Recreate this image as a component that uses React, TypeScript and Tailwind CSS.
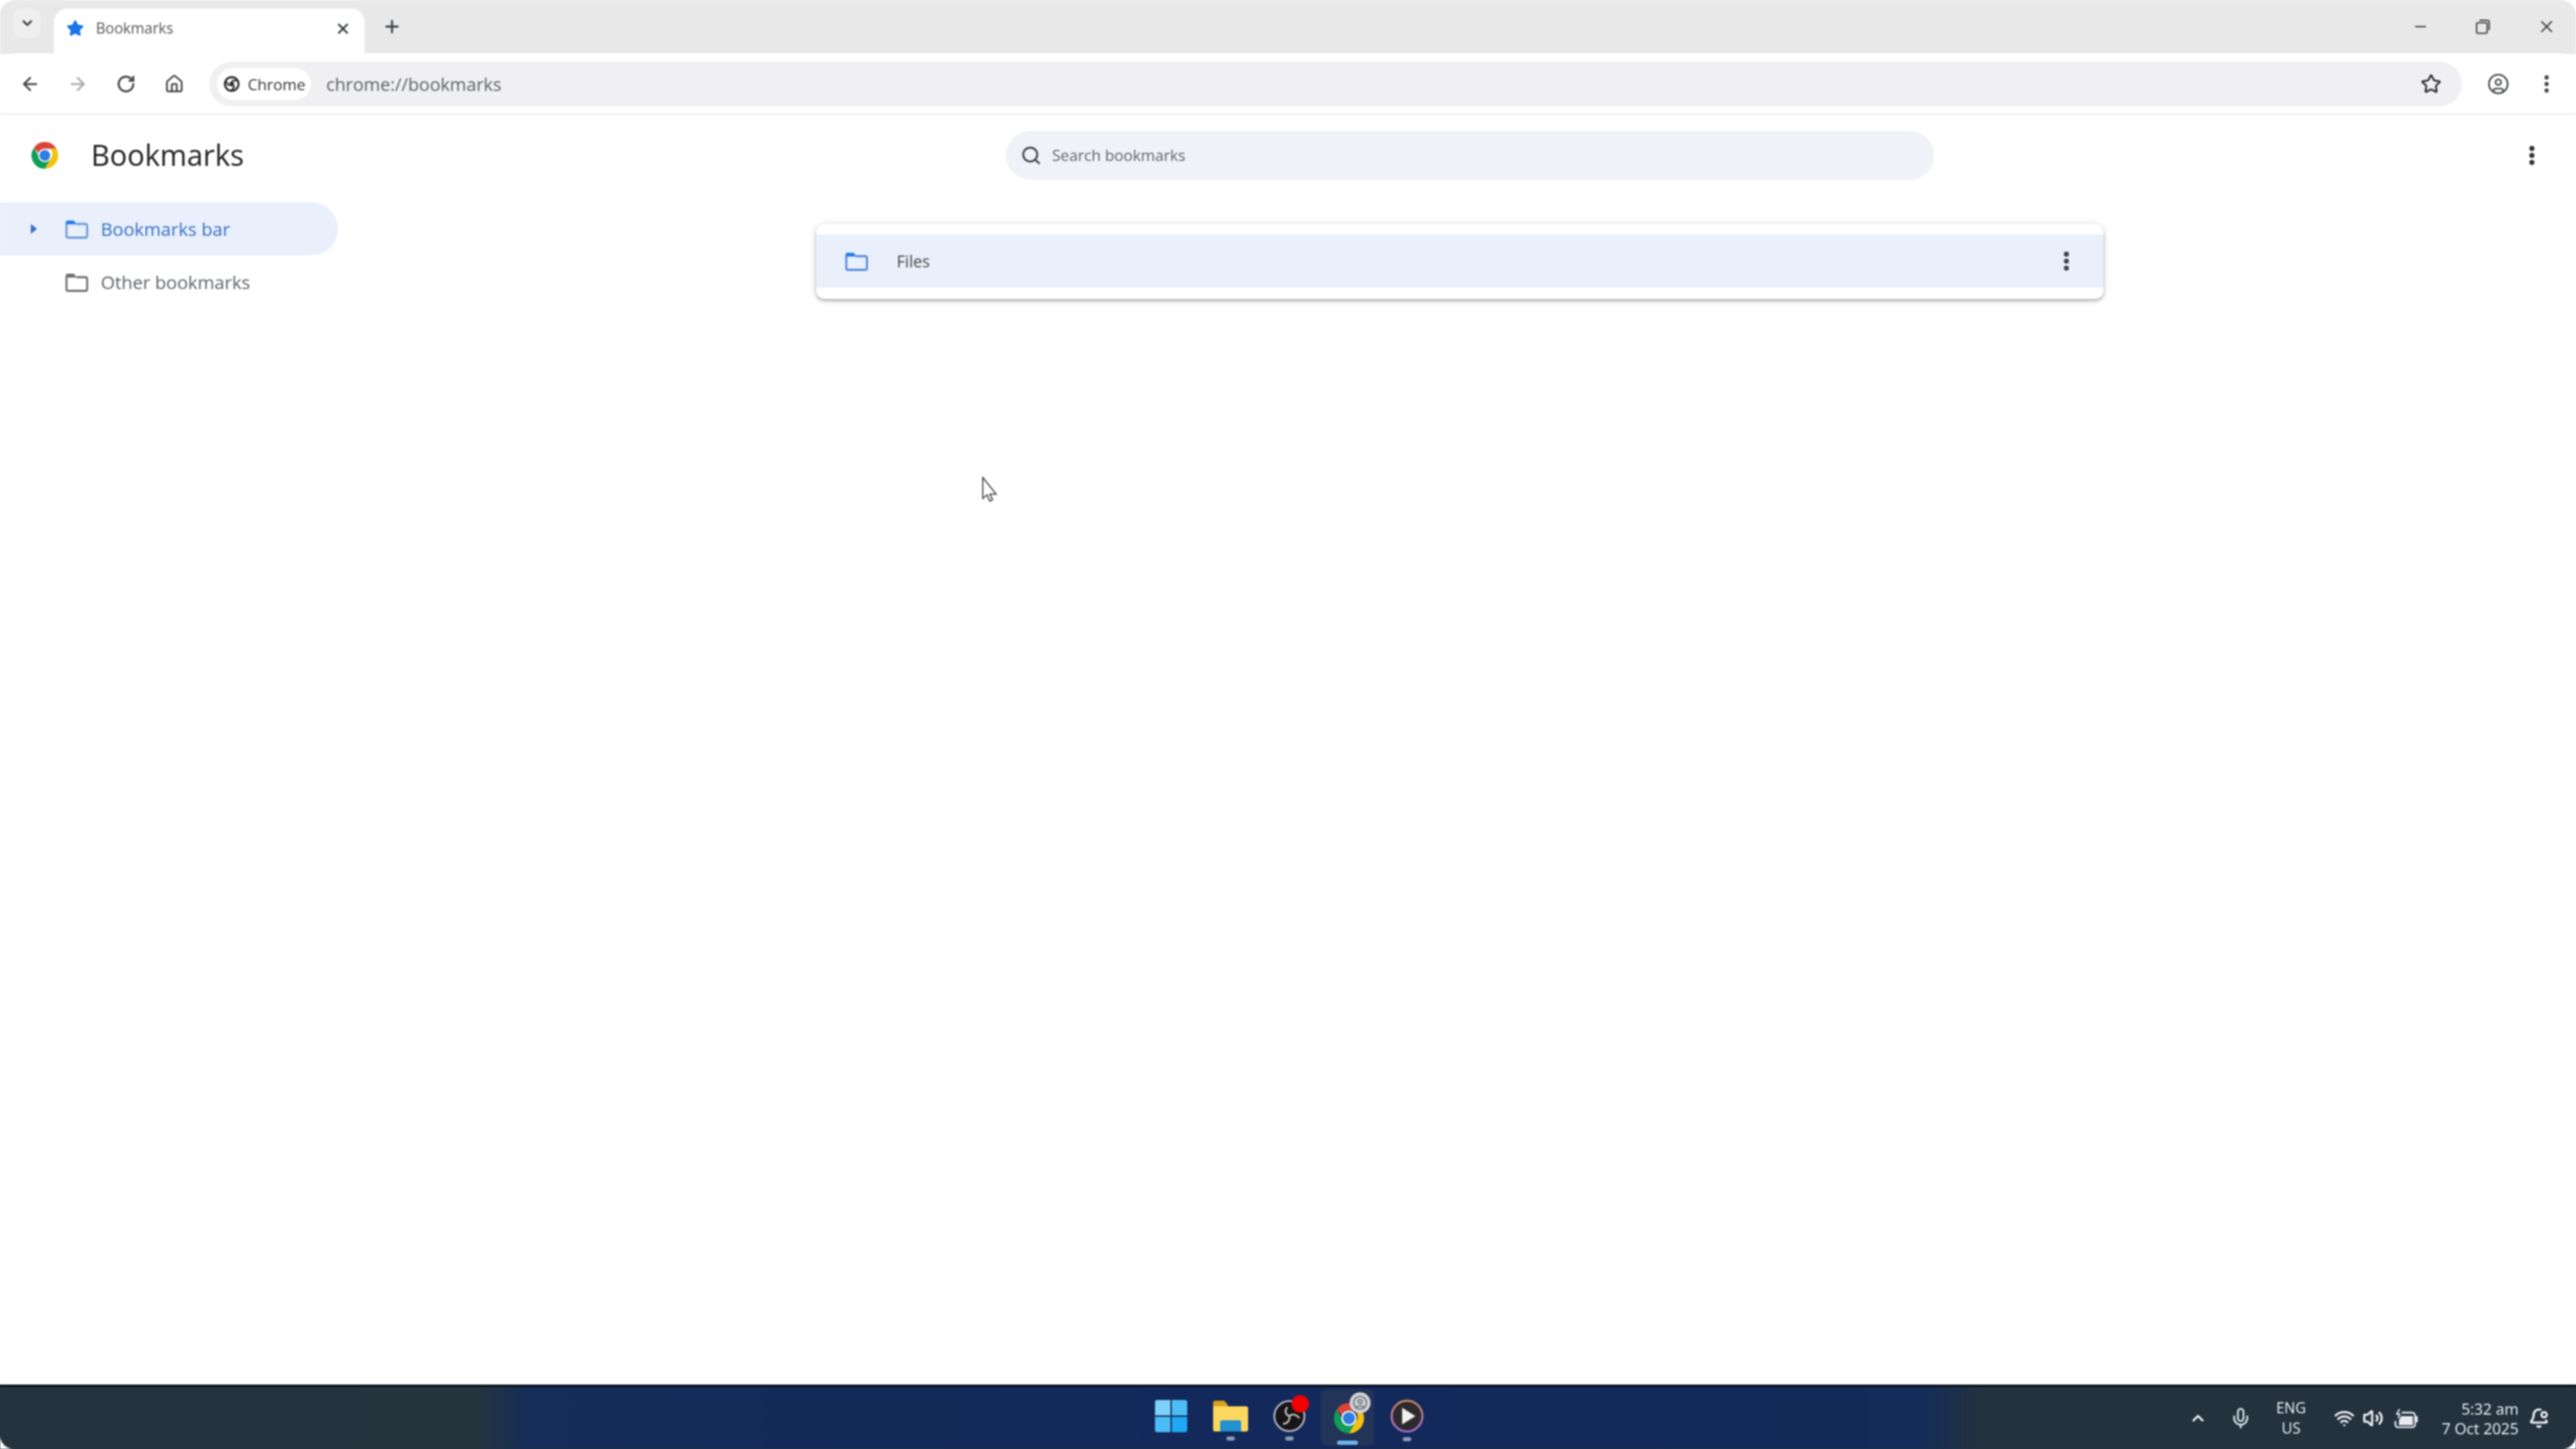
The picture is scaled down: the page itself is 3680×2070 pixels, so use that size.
import { ArrowLeft, ArrowRight, ChevronDown, ChevronUp, EllipsisVertical, House, Mic, Minus, Plus, RotateCw, Search, Star, Volume2, Wifi, X, BellDot, CircleUser } from 'lucide-react';

const sans = { fontFamily: '"Open Sans", "Noto Sans", sans-serif' };

function ChromeLogo({ className }: { className?: string }) {
  return (
    <svg viewBox="0 0 48 48" className={className}>
      <path d="M24 4a20 20 0 0 1 17.300 10H24a10 10 0 0 0-9.400 6.600L7.900 12.400A20 20 0 0 1 24 4z" fill="#db4437" />
      <path d="M41.300 14A20 20 0 0 1 24 44l8.600-15a10 10 0 0 0-1-15z" fill="#f4c20d" />
      <path d="M24 44A20 20 0 0 1 7.900 12.400l8.400 14.500A10 10 0 0 0 32.600 29z" fill="#0f9d58" />
      <circle cx="24" cy="24" r="10" fill="#fff" />
      <circle cx="24" cy="24" r="8" fill="#2f7de1" />
    </svg>
  );
}

function MonoChrome({ className }: { className?: string }) {
  return (
    <svg viewBox="0 0 24 24" className={className} fill="none" stroke="#2b2b2b" strokeWidth="2.600">
      <circle cx="12" cy="12" r="9" />
      <circle cx="12" cy="12" r="3.200" fill="#2b2b2b" stroke="none" />
      <path d="M12 7.500h8.400M8 14.500 3.900 7.400M15.900 14.500 11.700 21" strokeWidth="2.200" />
    </svg>
  );
}

function Folder({ className, color, top }: { className?: string; color: string; top: string }) {
  return (
    <svg viewBox="0 0 33 27" className={className} fill="none">
      <path d="M2 4.500V23a2.500 2.500 0 0 0 2.500 2.500h24.500a2.500 2.500 0 0 0 2.500-2.500V8.500A2.500 2.500 0 0 0 29 6H16" stroke={color} strokeWidth="2.800" />
      <path d="M1 5V3.500A2.500 2.500 0 0 1 3.500 1h9l4 5.500H1z" fill={top} />
    </svg>
  );
}

function TitleBar() {
  return (
    <div className="flex h-[77px] shrink-0 items-stretch rounded-t-[22px] bg-[#e8e8e9] pl-[19px] pr-[28px] text-[#3c4043]">
      <div className="mt-[12px] flex h-[42px] w-[39px] items-center justify-center rounded-[12px] bg-[#efeff0]">
        <ChevronDown className="h-[22px] w-[22px]" strokeWidth={3} />
      </div>
      <div className="ml-[19px] mt-[12px] flex w-[444px] items-center rounded-t-[20px] bg-white pb-[8px] pl-[18px] pr-[19px]">
        <Star className="h-[25px] w-[25px] text-[#1a73e8]" fill="#1a73e8" />
        <span className="ml-[17px] text-[21px] text-[#555]" style={sans}>Bookmarks</span>
        <X className="ml-auto h-[24px] w-[24px]" strokeWidth={2.600} />
      </div>
      <div className="ml-[25px] mb-[2px] flex items-center">
        <Plus className="h-[28px] w-[28px]" strokeWidth={2.400} />
      </div>
      <div className="ml-auto flex items-center gap-[65px] pb-[2px] text-[#444]">
        <Minus className="h-[24px] w-[24px]" strokeWidth={2} />
        <svg viewBox="0 0 24 24" className="h-[24px] w-[24px]" fill="none" stroke="currentColor" strokeWidth="2">
          <rect x="3" y="6.500" width="15" height="15" rx="2" />
          <path d="M7 3h11a3 3 0 0 1 3 3v11" />
        </svg>
        <X className="h-[28px] w-[28px]" strokeWidth={1.800} />
      </div>
    </div>
  );
}

function Toolbar() {
  return (
    <div className="-mt-[1px] flex h-[88px] shrink-0 items-center rounded-t-[22px] border-b-[2px] border-[#eeeeee] bg-white pl-[28px] pr-[26px] pt-[2px] text-[#444746]">
      <ArrowLeft className="h-[30px] w-[30px]" strokeWidth={2.200} />
      <ArrowRight className="ml-[38px] h-[30px] w-[30px] text-[#a9abad]" strokeWidth={2.200} />
      <RotateCw className="ml-[40px] h-[28px] w-[28px]" strokeWidth={2.400} />
      <House className="ml-[41px] h-[28px] w-[28px]" strokeWidth={2.200} />
      <div className="ml-[36px] flex h-[64px] flex-1 items-center rounded-full bg-[#f0f0f2] pl-[11px] pr-[29px]">
        <div className="flex h-[46px] w-[134px] items-center rounded-full bg-white pl-[8px]">
          <MonoChrome className="h-[26px] w-[26px]" />
          <span className="ml-[10px] text-[22px] text-[#333]" style={sans}>Chrome</span>
        </div>
        <span className="ml-[22px] text-[25.500px] text-[#5f6368]" style={sans}>chrome://bookmarks</span>
        <Star className="ml-auto h-[30px] w-[30px] text-[#333]" strokeWidth={2.200} />
      </div>
      <CircleUser className="ml-[36px] h-[32px] w-[32px]" strokeWidth={1.800} />
      <EllipsisVertical className="ml-[37px] h-[32px] w-[32px]" strokeWidth={2.600} />
    </div>
  );
}

function PageHeader() {
  return (
    <div className="flex h-[125px] shrink-0 items-center pb-[10px] pl-[41px] pr-[46px]">
      <ChromeLogo className="h-[46px] w-[46px]" />
      <h1 className="ml-[43px] w-[1307px] text-[41.500px] leading-none text-[#202124]" style={sans}>Bookmarks</h1>
      <div className="flex h-[70px] w-[1326px] items-center rounded-full bg-[#f0f2f8] pl-[21px] text-[#5f6368]">
        <Search className="h-[30px] w-[30px] text-[#444]" strokeWidth={2.200} />
        <span className="ml-[15px] text-[22px]" style={sans}>Search bookmarks</span>
      </div>
      <EllipsisVertical className="ml-auto h-[34px] w-[34px] text-[#1f1f1f]" strokeWidth={3} />
    </div>
  );
}

function Sidebar() {
  return (
    <div className="w-[483px] shrink-0 text-[26px]" style={sans}>
      <div className="flex h-[76px] items-center rounded-r-full bg-[#e9f0fb] pl-[43px] text-[#3a6fc8]">
        <svg viewBox="0 0 10 14" className="h-[14px] w-[10px]" fill="#3a6fc8"><path d="M1 0l9 7-9 7z" /></svg>
        <Folder className="ml-[40px] h-[27px] w-[33px]" color="#6a96dc" top="#2a7be4" />
        <span className="ml-[18px]">Bookmarks bar</span>
      </div>
      <div className="flex h-[77px] items-center pl-[93px] text-[#5f6368]">
        <Folder className="h-[27px] w-[33px]" color="#6e6e6e" top="#6e6e6e" />
        <span className="ml-[18px]">Other bookmarks</span>
      </div>
    </div>
  );
}

function FilesCard() {
  return (
    <div className="ml-[683px] mt-[31px] h-[107px] w-[1839px] rounded-[12px] bg-white py-[15px] shadow-[0_3px_5px_rgba(0,0,0,0.28),0_0_14px_rgba(0,0,0,0.09)]">
      <div className="flex h-[76px] items-center bg-[#e9f0fb] pl-[41px] pr-[36px]">
        <Folder className="h-[27px] w-[33px]" color="#4f86dc" top="#2a7be4" />
        <span className="ml-[41px] text-[23px] text-[#444]" style={sans}>Files</span>
        <EllipsisVertical className="ml-auto h-[34px] w-[34px] text-[#2b3440]" strokeWidth={3} />
      </div>
    </div>
  );
}

function WindowsLogo() {
  return (
    <div className="grid h-[46px] w-[46px] grid-cols-2 gap-[2px]">
      <div className="rounded-tl-[3px] bg-[#7cd2fa]" />
      <div className="rounded-tr-[3px] bg-[#4dbdf6]" />
      <div className="rounded-bl-[3px] bg-[#4cbcf6]" />
      <div className="rounded-br-[3px] bg-[#1fa8f3]" />
    </div>
  );
}

function ExplorerIcon() {
  return (
    <svg viewBox="0 0 50 46" className="h-[46px] w-[50px]">
      <path d="M0 4a3 3 0 0 1 3-3h13l5 6h0v6H0z" fill="#d9a11e" />
      <path d="M0 9h47a3 3 0 0 1 3 3v30a3 3 0 0 1-3 3H3a3 3 0 0 1-3-3z" fill="#fcd75f" />
      <path d="M10 45V32a3 3 0 0 1 3-3h24a3 3 0 0 1 3 3v13z" fill="#2390d0" />
    </svg>
  );
}

function ObsIcon() {
  return (
    <div className="relative h-[46px] w-[46px]">
      <svg viewBox="0 0 46 46" className="h-[46px] w-[46px]" fill="none">
        <circle cx="23" cy="23" r="21.500" fill="#16161a" stroke="#b9bdc6" strokeWidth="2.500" />
        <path d="M23 23c-6-2-7-8-3-13M23 23c5-4 11-2 14 3M23 23c1 6-3 11-9 11" stroke="#c9c3b6" strokeWidth="2.500" />
      </svg>
      <div className="absolute -right-[5px] -top-[7px] h-[25px] w-[25px] rounded-full bg-[#f40000]" />
    </div>
  );
}

function PlayerIcon() {
  return (
    <svg viewBox="0 0 48 48" className="h-[48px] w-[48px]">
      <defs>
        <linearGradient id="ring" x1="0" y1="0" x2="0" y2="1">
          <stop offset="0" stopColor="#c98a5e" />
          <stop offset="1" stopColor="#a56bd0" />
        </linearGradient>
      </defs>
      <circle cx="24" cy="24" r="22" fill="#2c2a2c" stroke="url(#ring)" strokeWidth="3" />
      <path d="M17 12l19 12-19 12z" fill="#f0f0ee" />
    </svg>
  );
}

function Dot({ active }: { active?: boolean }) {
  return active ? (
    <div className="mt-[6px] h-[6px] w-[30px] rounded-full bg-[#6fb6ee]" />
  ) : (
    <div className="mt-[6px] h-[6px] w-[12px] rounded-full bg-[#8a9bb5]" />
  );
}

function Taskbar() {
  return (
    <div className="flex h-[92px] shrink-0 rounded-b-[20px] border-t-[3px] border-[#050a14] bg-[linear-gradient(90deg,#25333e_0%,#26343e_18.500%,#152d58_20.500%,#13295c_50%,#142c5a_74.500%,#24323e_77%,#24323e_100%)] text-[#f2f4f7]" style={sans}>
      <div className="ml-[1650px] flex items-start pt-[19px]">
        <div className="flex w-[46px] flex-col items-center">
          <WindowsLogo />
        </div>
        <div className="ml-[37px] flex w-[50px] flex-col items-center">
          <ExplorerIcon />
          <Dot />
        </div>
        <div className="ml-[36px] flex w-[46px] flex-col items-center">
          <ObsIcon />
          <Dot />
        </div>
      </div>
      <div className="relative ml-[22px] mt-[4px] flex h-[80px] w-[76px] flex-col items-center rounded-[8px] bg-[#223457] pt-[15px]">
        <ChromeLogo className="ml-[4px] h-[52px] w-[52px]" />
        <div className="absolute left-[41px] top-[4px] flex h-[30px] w-[30px] items-center justify-center rounded-full bg-[#cfd2d6]">
          <CircleUser className="h-[22px] w-[22px] text-[#6a6d72]" strokeWidth={2} />
        </div>
        <Dot active />
      </div>
      <div className="ml-[23px] flex w-[48px] flex-col items-center pt-[18px]">
        <PlayerIcon />
        <Dot />
      </div>
      <div className="ml-[1079px] flex items-center">
        <ChevronUp className="ml-[14px] h-[26px] w-[26px]" strokeWidth={2.800} />
        <Mic className="ml-[32px] h-[32px] w-[32px] text-[#d8e4e8]" strokeWidth={2} />
        <div className="ml-[26px] flex w-[60px] flex-col items-center text-[21px] leading-[29px]">
          <span>ENG</span>
          <span>US</span>
        </div>
        <Wifi className="ml-[31px] h-[30px] w-[30px]" strokeWidth={2.400} />
        <Volume2 className="ml-[11px] h-[30px] w-[30px]" strokeWidth={2.400} />
        <svg viewBox="0 0 36 28" className="ml-[14px] h-[28px] w-[36px]" fill="none">
          <path d="M9 1 5 8h4L7 14" stroke="#e8eaed" strokeWidth="2" />
          <path d="M12 6h15a4 4 0 0 1 4 4v13a4 4 0 0 1-4 4H7a4 4 0 0 1-4-4v-5" stroke="#e8eaed" strokeWidth="2.500" />
          <path d="M11 11h17v13H8v-7z" fill="#e8eaed" />
          <rect x="32" y="11" width="3" height="9" rx="1" fill="#e8eaed" />
        </svg>
        <div className="ml-[19px] flex w-[124px] flex-col items-end whitespace-nowrap text-[22px] leading-[28px]">
          <span>5:32 am</span>
          <span>7 Oct 2025</span>
        </div>
        <BellDot className="ml-[14px] h-[30px] w-[30px]" strokeWidth={2.400} />
      </div>
    </div>
  );
}

export default function App() {
  return (
    <div className="h-[2070px] w-[3680px] overflow-hidden bg-[linear-gradient(180deg,#ffffff_0,#ffffff_1978px,#25333e_1978px,#25333e_100%)]">
      <div className="relative flex h-[2070px] w-[3680px] flex-col bg-white blur-[1px]">
        <TitleBar />
        <Toolbar />
        <PageHeader />
        <div className="flex min-h-0 flex-1">
          <Sidebar />
          <FilesCard />
        </div>
        <Taskbar />
        {/* mouse pointer */}
        <svg viewBox="0 0 24 36" className="absolute left-[1402px] top-[681px] h-[36px] w-[24px]" fill="#fff" stroke="#333" strokeWidth="1.600">
          <path d="M2 1v30l6-5 4 9 4-2-4-8h9z" />
        </svg>
      </div>
    </div>
  );
}
